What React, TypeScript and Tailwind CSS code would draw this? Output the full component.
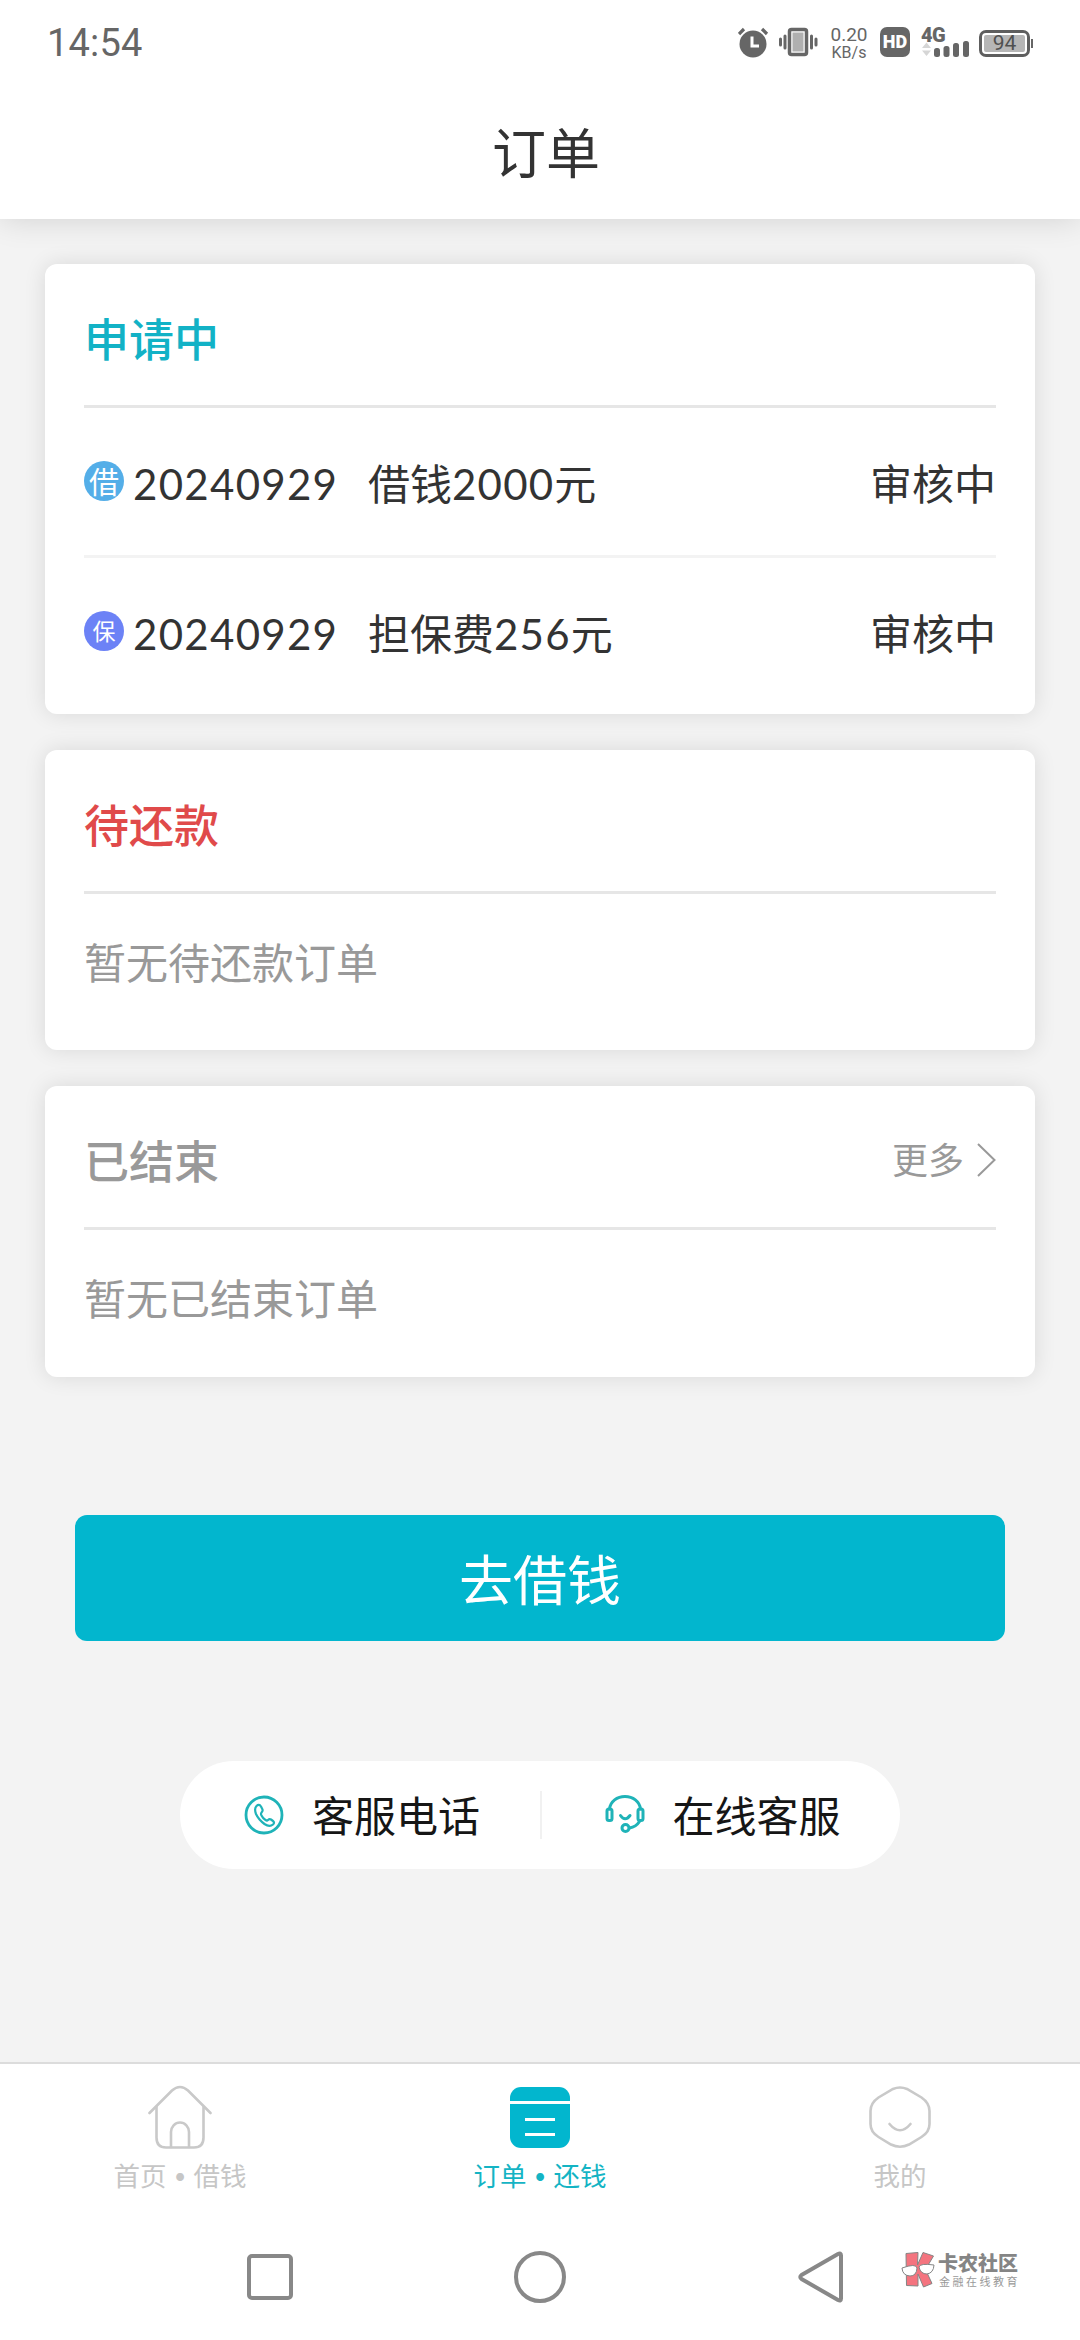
import type { ReactNode } from 'react'

const orders = [
  { id: 1, badge: '借', badgeClass: 'bg-[#54aee8] text-[30px]', date: '20240929', name: '借钱', amount: '2000', status: '审核中' },
  { id: 2, badge: '保', badgeClass: 'bg-[#6c82f6] text-[23px]', date: '20240929', name: '担保费', amount: '256', status: '审核中' },
]

function StatusBar() {
  return (
    <div className="flex items-start h-[84px] pl-[47px] pr-[47px] pt-[22px] text-[#666]">
      <span className="text-[38px] leading-[42px] font-['Roboto'] tracking-[0.2px]">14:54</span>
      <svg className="ml-auto mt-[5px]" width="32" height="31" viewBox="0 0 32 31" fill="none">
        <circle cx="15" cy="17" r="13.5" fill="#666" />
        <path d="M1 7 6 2M29 7 24 2" stroke="#666" strokeWidth="3.2" />
        <path d="M14 9.5v9.5h7" stroke="#fff" strokeWidth="3" />
      </svg>
      <svg className="ml-[9px] mt-[5px]" width="39" height="31" viewBox="0 0 39 31" fill="none">
        <rect x="10.5" y="2.5" width="17" height="25" rx="2" stroke="#666" strokeWidth="3.5" />
        <rect x="13.5" y="5.5" width="11" height="19" fill="#b0b0b0" />
        <path d="M1.5 12v6M6 9v12M32.5 9v12M37 12v6" stroke="#666" strokeWidth="3" strokeLinecap="round" />
      </svg>
      <div className="ml-[11px] mt-[3px] w-[40px] flex flex-col items-center font-['Roboto']">
        <span className="text-[19px] leading-[20px]">0.20</span>
        <span className="text-[16px] leading-[16px]">KB/s</span>
      </div>
      <div className="ml-[11px] mt-[5px] size-[30px] rounded-[7px] bg-[#666] text-white flex items-center justify-center font-['Roboto'] font-black text-[18px] leading-[30px]">
        HD
      </div>
      <div className="relative ml-[11px] mt-[2px] w-[49px] h-[34px]">
        <span className="block text-[20px] leading-[22px] tracking-[-0.5px] font-black font-['Roboto']">4G</span>
        <svg className="absolute left-0 top-[2px]" width="49" height="32" viewBox="0 0 49 32">
          <path d="M1 22 5.5 16.5 10 22zM1 24.5h9L5.5 30z" fill="#d6d6d6" />
          <rect x="13" y="22" width="6" height="9" rx="2.5" fill="#666" />
          <rect x="22.5" y="20" width="6" height="11" rx="2.5" fill="#666" />
          <rect x="32" y="17" width="6" height="14" rx="2.5" fill="#666" />
          <rect x="42" y="15" width="6" height="16" rx="2.5" fill="#666" />
        </svg>
      </div>
      <div className="ml-[9px] mt-[8px] w-[51px] h-[27px] rounded-[7px] border-[3px] border-[#5e5e5e] p-[2px]">
        <div className="h-full rounded-[2px] bg-[#b6b6b6] flex items-center justify-center font-['Roboto'] text-[21px] leading-none text-[#505050]">
          94
        </div>
      </div>
      <div className="ml-[1px] mt-[17px] w-[2px] h-[9px] bg-[#666]" />
    </div>
  )
}

function Card({ title, titleClass, action, children }: {
  title: string
  titleClass: string
  action?: ReactNode
  children: ReactNode
}) {
  return (
    <section className="bg-white rounded-[12px] px-[39px] shadow-[0_0_22px_rgba(0,0,0,0.11)]">
      <div className="flex items-center justify-between h-[144px] pt-[10px] border-b-[3px] border-[#e6e6e6]">
        <h2 className={`text-[45px] leading-[60px] font-medium ${titleClass}`}>{title}</h2>
        {action}
      </div>
      {children}
    </section>
  )
}

function HomeIcon() {
  return (
    <svg width="64" height="64" viewBox="0 0 64 64" fill="none" stroke="#c9c9c9" strokeWidth="2.6" strokeLinecap="round">
      <path d="M1.5 28 24 5.5Q32-1.5 40 5.5L62.5 28" />
      <path d="M8.5 22v30.5Q8.5 62.500 18 62.500h28Q55.500 62.500 55.500 52.500V22" />
      <path d="M23 62V47a9 9.500 0 0 1 18 0v15" />
    </svg>
  )
}

function OrderIcon() {
  return (
    <svg width="64" height="64" viewBox="0 0 64 64">
      <rect x="2" y="2" width="60" height="61" rx="11" fill="#02b6ce" />
      <path d="M2 17.5h60M17 34.5h30M17 49.5h30" stroke="#fff" strokeWidth="2.8" />
    </svg>
  )
}

function MineIcon() {
  return (
    <svg width="64" height="64" viewBox="0 0 64 64" fill="none" stroke="#c9c9c9" strokeWidth="2.6" strokeLinecap="round">
      <path d="M25 4Q32 1 39 4L53.5 12.5Q61.500 18 61.500 26V39Q61.500 47 53.500 52L41 59.500Q32 64 23 59.500L10.500 52Q2.500 47 2.500 39V26Q2.500 18 10.500 12.500Z" />
      <path d="M21.5 39q10.500 12.500 21 0" />
    </svg>
  )
}

function PhoneIcon() {
  return (
    <svg width="40" height="40" viewBox="0 0 40 40" fill="none" stroke="#1fb3b8" strokeWidth="2.8" strokeLinejoin="round">
      <circle cx="20" cy="20" r="18" />
      <path d="M12.5 11q2.500-2.500 4.500.5l1.500 3q.5 1.500-1 3-1 1.500 0 3 1.500 3 4 4.500 1.500 1 2.500 0 1.500-1.500 3-.5l2 1.500q2 1.500 0 3.500-3.500 3-8.500-.5-6-4.500-8.500-10-2-5.500.5-8z" strokeWidth="2.2" />
    </svg>
  )
}

function HeadsetIcon() {
  return (
    <svg width="40" height="40" viewBox="0 0 40 40" fill="none" stroke="#1fb3b8" strokeWidth="3" strokeLinecap="round">
      <path d="M4.5 14C5.5 6.5 12 1.5 20 1.5S34.5 6.5 35.5 14" />
      <rect x="2" y="14" width="5" height="11.5" rx="2" />
      <rect x="33" y="14" width="5" height="11.5" rx="2" />
      <path d="M15.5 20.5q4.500 6.500 9.500 0" />
      <path d="M34.5 26.5Q31 32 24.5 33" />
      <circle cx="20.5" cy="33" r="3.5" />
    </svg>
  )
}

function Tab({ icon, labels, active }: { icon: ReactNode; labels: string[]; active?: boolean }) {
  return (
    <div className={`flex-1 flex flex-col items-center pt-[21px] ${active ? 'text-[#14b4c4]' : 'text-[#c6c6c6]'}`}>
      {icon}
      <div className="mt-[9px] text-[26.5px] leading-[36px] flex">
        <span>{labels[0]}</span>
        {labels[1] && (
          <>
            <span className="w-[27px] text-center text-[21px]">•</span>
            <span>{labels[1]}</span>
          </>
        )}
      </div>
    </div>
  )
}

function Watermark() {
  return (
    <div className="absolute left-[900px] top-[31px] flex text-[#858585]">
      <svg width="36" height="38" viewBox="0 0 36 38">
        <path d="M6 2.5 18 1.5 17.5 14 23 1.5 33.5 5 25.5 18.5 32 32.5 23.5 36 18 23V35L6.5 34.5Z" fill="#f4747f" stroke="#858585" strokeWidth="1" />
        <path d="M2 17q14-5 15 0-.5 8-7 8-7.500-.5-8-8zM19 16q1-4 15-2-.5 8-7 9-6.500 0-8-7z" fill="#fff" stroke="#858585" strokeWidth="1" />
      </svg>
      <div className="ml-[2px] pt-px">
        <div className="text-[20px] leading-[23px] font-black">卡农社区</div>
        <div className="text-[11px] leading-[14px] tracking-[2.5px] ml-px text-[#999]">金融在线教育</div>
      </div>
    </div>
  )
}

export default function App() {
  return (
    <div className="w-[1080px] h-[2340px] flex flex-col overflow-hidden bg-[#f3f3f3] font-['Lato','Noto_Sans_CJK_SC',sans-serif] text-[#333]">
      <header className="h-[219px] shrink-0 bg-white shadow-[0_0_30px_rgba(0,0,0,0.14)]">
        <StatusBar />
        <h1 className="pt-[40px] pl-[12px] text-center text-[54px] leading-[60px]">订单</h1>
      </header>

      <main className="pt-[45px] px-[45px] flex flex-col gap-[36px]">
        <Card title="申请中" titleClass="text-[#12b2c6]">
          <div className="pb-[9px]">
            {orders.map((o, i) => (
              <div
                key={o.id}
                className={`flex items-center ${i < orders.length - 1 ? 'h-[150px] border-b-[3px] border-[#f3f3f3]' : 'h-[147px]'}`}
              >
                <span className={`-mt-px size-[40px] rounded-full flex items-center justify-center leading-none text-white ${o.badgeClass}`}>
                  {o.badge}
                </span>
                <span className="ml-[9px] mt-[4px] w-[235px] text-[42px] leading-[50px] tracking-[1.3px]">{o.date}</span>
                <span className="mt-[4px] text-[42px] leading-[50px]">
                  {o.name}
                  <span className="tracking-[1.2px]">{o.amount}</span>元
                </span>
                <span className="ml-auto mt-[4px] text-[42px] leading-[50px]">{o.status}</span>
              </div>
            ))}
          </div>
        </Card>

        <Card title="待还款" titleClass="text-[#e04a4a]">
          <p className="h-[156px] pt-[39px] text-[42px] leading-[60px] text-[#999]">暂无待还款订单</p>
        </Card>

        <Card
          title="已结束"
          titleClass="text-[#999]"
          action={
            <div className="flex items-center -mt-[3px] text-[36px] leading-[48px] text-[#999]">
              更多
              <svg className="ml-[13px]" width="19" height="34" viewBox="0 0 19 34" fill="none" stroke="#999" strokeWidth="2">
                <path d="M1 1 17.5 17 1 33" />
              </svg>
            </div>
          }
        >
          <p className="h-[147px] pt-[39px] text-[42px] leading-[60px] text-[#999]">暂无已结束订单</p>
        </Card>
      </main>

      <button className="mt-[138px] mx-[75px] h-[126px] shrink-0 rounded-[12px] bg-[#02b6ce] text-white text-[54px] leading-[60px] pt-[6px]">
        去借钱
      </button>

      <div className="mt-[120px] mx-auto w-[720px] h-[108px] shrink-0 rounded-full bg-white flex items-center text-[42px] leading-[50px] text-[#161616]">
        <div className="flex-1 flex items-center pl-[64px] gap-[28px]">
          <PhoneIcon />
          <span className="mt-[2px]">客服电话</span>
        </div>
        <div className="w-[2px] h-[48px] bg-[#f1f1f1]" />
        <div className="flex-1 flex items-center pl-[63px] gap-[28px]">
          <HeadsetIcon />
          <span className="mt-[2px]">在线客服</span>
        </div>
      </div>

      <footer className="mt-auto h-[278px] shrink-0 bg-white border-t-2 border-[#dcdcdc]">
        <nav className="flex h-[156px]">
          <Tab icon={<HomeIcon />} labels={['首页', '借钱']} />
          <Tab icon={<OrderIcon />} labels={['订单', '还钱']} active />
          <Tab icon={<MineIcon />} labels={['我的']} />
        </nav>
        <div className="relative h-[120px] pl-[247px] pt-[31px] flex">
          <div className="mt-[3px] size-[46px] rounded-[5px] border-4 border-[#888]" />
          <div className="ml-[221px] size-[52px] rounded-full border-4 border-[#888]" />
          <svg className="ml-[232px]" width="47" height="52" viewBox="0 0 47 52" fill="none" stroke="#888" strokeWidth="4" strokeLinejoin="round">
            <path d="M43 4.5v43Q43 50.5 40 49L3.5 28Q1 26 3.5 24L40 3Q43 1.5 43 4.5z" />
          </svg>
          <Watermark />
        </div>
      </footer>
    </div>
  )
}
